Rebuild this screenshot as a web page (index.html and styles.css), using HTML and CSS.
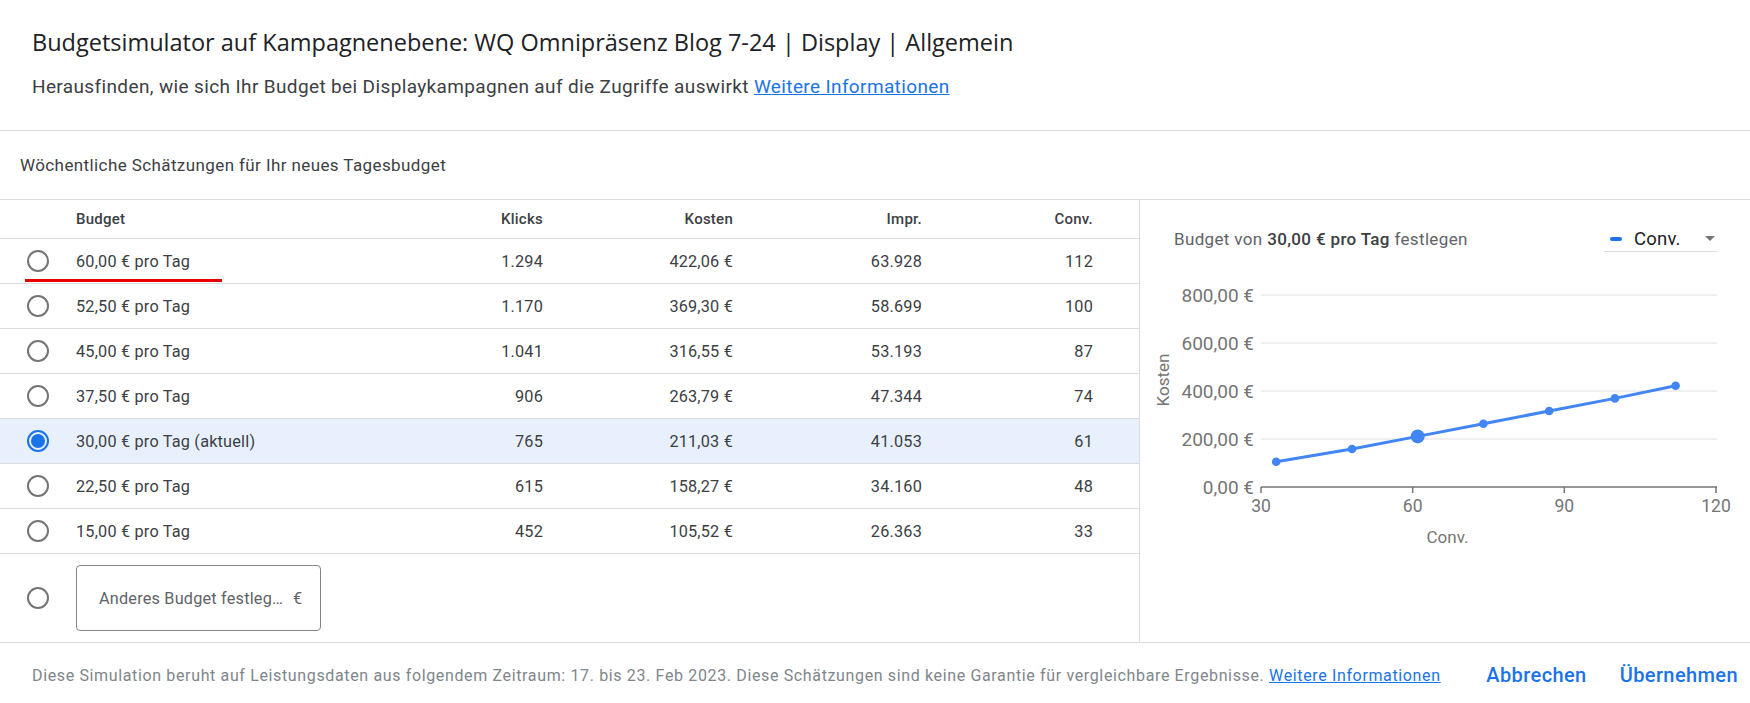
FILE: index.html
```html
<!DOCTYPE html>
<html lang="de">
<head>
<meta charset="utf-8">
<title>Budgetsimulator</title>
<link rel="stylesheet" href="styles.css">
</head>
<body>
<div class="dialog">
  <header class="dialog-head">
    <h1 class="title">Budgetsimulator auf Kampagnenebene: WQ Omnipräsenz Blog 7-24 | Display | Allgemein</h1>
    <p class="subtitle">Herausfinden, wie sich Ihr Budget bei Displaykampagnen auf die Zugriffe auswirkt <a href="#" class="link">Weitere Informationen</a></p>
  </header>

  <div class="section-title">Wöchentliche Schätzungen für Ihr neues Tagesbudget</div>

  <div class="main">
    <div class="table">
      <div class="row head">
        <span></span>
        <span class="c-budget">Budget</span>
        <span class="num">Klicks</span>
        <span class="num">Kosten</span>
        <span class="num">Impr.</span>
        <span class="num">Conv.</span>
      </div>
      <div class="row">
        <span class="radio"></span>
        <span class="c-budget marked">60,00 € pro Tag</span>
        <span class="num">1.294</span>
        <span class="num">422,06 €</span>
        <span class="num">63.928</span>
        <span class="num">112</span>
      </div>
      <div class="row">
        <span class="radio"></span>
        <span class="c-budget">52,50 € pro Tag</span>
        <span class="num">1.170</span>
        <span class="num">369,30 €</span>
        <span class="num">58.699</span>
        <span class="num">100</span>
      </div>
      <div class="row">
        <span class="radio"></span>
        <span class="c-budget">45,00 € pro Tag</span>
        <span class="num">1.041</span>
        <span class="num">316,55 €</span>
        <span class="num">53.193</span>
        <span class="num">87</span>
      </div>
      <div class="row">
        <span class="radio"></span>
        <span class="c-budget">37,50 € pro Tag</span>
        <span class="num">906</span>
        <span class="num">263,79 €</span>
        <span class="num">47.344</span>
        <span class="num">74</span>
      </div>
      <div class="row selected">
        <span class="radio checked"></span>
        <span class="c-budget">30,00 € pro Tag (aktuell)</span>
        <span class="num">765</span>
        <span class="num">211,03 €</span>
        <span class="num">41.053</span>
        <span class="num">61</span>
      </div>
      <div class="row">
        <span class="radio"></span>
        <span class="c-budget">22,50 € pro Tag</span>
        <span class="num">615</span>
        <span class="num">158,27 €</span>
        <span class="num">34.160</span>
        <span class="num">48</span>
      </div>
      <div class="row">
        <span class="radio"></span>
        <span class="c-budget">15,00 € pro Tag</span>
        <span class="num">452</span>
        <span class="num">105,52 €</span>
        <span class="num">26.363</span>
        <span class="num">33</span>
      </div>
      <div class="row custom">
        <span class="radio"></span>
        <div class="budget-input">
          <span class="placeholder">Anderes Budget festleg…</span>
          <span class="currency">€</span>
        </div>
      </div>
    </div>

    <aside class="chart-panel">
      <div class="chart-head">
        <span class="chart-caption">Budget von <b>30,00 € pro Tag</b> festlegen</span>
        <div class="metric-select">
          <span class="swatch"></span>
          <span class="metric-name">Conv.</span>
          <span class="caret"></span>
        </div>
      </div>
      <svg class="chart" width="610" height="300" viewBox="0 0 610 300">
        <g class="grid">
          <line x1="121" y1="33" x2="577" y2="33"/>
          <line x1="121" y1="81" x2="577" y2="81"/>
          <line x1="121" y1="129" x2="577" y2="129"/>
          <line x1="121" y1="177" x2="577" y2="177"/>
        </g>
        <g class="axis">
          <line x1="121" y1="225" x2="577" y2="225"/>
          <line x1="121" y1="225" x2="121" y2="231"/>
          <line x1="272.7" y1="225" x2="272.7" y2="231"/>
          <line x1="424.3" y1="225" x2="424.3" y2="231"/>
          <line x1="576" y1="225" x2="576" y2="231"/>
        </g>
        <g class="ylabels">
          <text x="114" y="39.5">800,00 €</text>
          <text x="114" y="87.5">600,00 €</text>
          <text x="114" y="135.5">400,00 €</text>
          <text x="114" y="183.5">200,00 €</text>
          <text x="114" y="231.5">0,00 €</text>
        </g>
        <g class="xlabels">
          <text x="121" y="250">30</text>
          <text x="272.7" y="250">60</text>
          <text x="424.3" y="250">90</text>
          <text x="576" y="250">120</text>
        </g>
        <text class="axis-title" x="307.5" y="281">Conv.</text>
        <text class="axis-title" transform="translate(28.5 118) rotate(-90)">Kosten</text>
        <polyline class="series" points="136.2,199.7 212,187 277.7,174.4 343.4,161.7 409.2,149 474.9,136.4 535.6,123.7"/>
        <g class="dots">
          <circle cx="136.2" cy="199.7" r="4.3"/>
          <circle cx="212" cy="187" r="4.3"/>
          <circle cx="277.7" cy="174.4" r="7"/>
          <circle cx="343.4" cy="161.7" r="4.3"/>
          <circle cx="409.2" cy="149" r="4.3"/>
          <circle cx="474.9" cy="136.4" r="4.3"/>
          <circle cx="535.6" cy="123.7" r="4.3"/>
        </g>
      </svg>
    </aside>
  </div>

  <footer class="dialog-foot">
    <p class="note">Diese Simulation beruht auf Leistungsdaten aus folgendem Zeitraum: 17. bis 23. Feb 2023. Diese Schätzungen sind keine Garantie für vergleichbare Ergebnisse. <a href="#" class="link">Weitere Informationen</a></p>
    <div class="actions">
      <button class="btn">Abbrechen</button>
      <button class="btn">Übernehmen</button>
    </div>
  </footer>
</div>
</body>
</html>
```

FILE: styles.css
```css
* { box-sizing: border-box; }

html, body {
  margin: 0;
  padding: 0;
  background: #fff;
}

body {
  font-family: Roboto, "Liberation Sans", Arial, sans-serif;
  color: #3c4043;
}

.dialog {
  width: 1750px;
  height: 703px;
  display: flex;
  flex-direction: column;
}

/* ---------- header ---------- */
.dialog-head {
  height: 131px;
  padding: 26px 0 0 32px;
  border-bottom: 1px solid #dadce0;
}

.title {
  margin: 0;
  font-family: "Open Sans", Roboto, sans-serif;
  font-weight: 400;
  font-size: 23.5px;
  line-height: 32px;
  color: #202124;
}

.subtitle {
  margin: 17px 0 0;
  font-size: 19px;
  line-height: 24px;
  letter-spacing: 0.37px;
  color: #3c4043;
}

.link {
  color: #1a73e8;
  text-decoration: underline;
}

/* ---------- section title ---------- */
.section-title {
  height: 69px;
  padding-left: 20px;
  display: flex;
  align-items: center;
  font-size: 17px;
  letter-spacing: 0.4px;
  color: #3c4043;
  border-bottom: 1px solid #dadce0;
}

/* ---------- main area ---------- */
.main {
  flex: 0 0 443px;
  display: flex;
  border-bottom: 1px solid #dadce0;
}

.table {
  width: 1140px;
  border-right: 1px solid #dadce0;
  display: flex;
  flex-direction: column;
}

.row {
  display: grid;
  grid-template-columns: 76px 1fr 190px 190px 189px 171px;
  padding-right: 46px;
  align-items: center;
  height: 45px;
  border-bottom: 1px solid #dadce0;
  font-size: 16.25px;
  letter-spacing: 0.2px;
  color: #3c4043;
}

.row.head {
  height: 39px;
  font-size: 15px;
  font-weight: 500;
  letter-spacing: 0.25px;
}

.row.selected {
  background: #e8f0fe;
}

.row.custom {
  flex: 1;
  border-bottom: none;
}

.num {
  text-align: right;
}

.c-budget {
  position: relative;
}

/* red annotation stroke under the first budget option */
.marked::after {
  content: "";
  position: absolute;
  left: -51px;
  top: 27px;
  width: 197px;
  height: 3px;
  background: #e60000;
}

.radio {
  justify-self: start;
  margin-left: 27px;
  width: 22px;
  height: 22px;
  border: 2px solid #757575;
  border-radius: 50%;
  position: relative;
}

.radio.checked {
  border-color: #1a73e8;
}

.radio.checked::after {
  content: "";
  position: absolute;
  left: 2px;
  top: 2px;
  width: 14px;
  height: 14px;
  border-radius: 50%;
  background: #1a73e8;
}

.budget-input {
  width: 245px;
  height: 66px;
  border: 1px solid #80868b;
  border-radius: 4px;
  display: flex;
  align-items: center;
  padding-left: 22px;
  gap: 10px;
  font-size: 16.25px;
  letter-spacing: 0.2px;
  color: #5f6368;
}

/* ---------- chart panel ---------- */
.chart-panel {
  flex: 1;
  display: flex;
  flex-direction: column;
}

.chart-head {
  height: 62px;
  padding: 26px 33px 0 34px;
  display: flex;
  justify-content: space-between;
  align-items: flex-start;
}

.chart-caption {
  font-size: 17px;
  line-height: 26px;
  letter-spacing: 0.35px;
  color: #5f6368;
}

.chart-caption b {
  font-weight: 500;
  color: #3c4043;
}

.metric-select {
  width: 113px;
  height: 26px;
  display: flex;
  align-items: center;
  padding-left: 6px;
  border-bottom: 1px solid #dadce0;
}

.swatch {
  width: 12px;
  height: 4px;
  border-radius: 2px;
  background: #1a73e8;
}

.metric-name {
  margin-left: 12px;
  font-size: 18.5px;
  letter-spacing: 0.2px;
  color: #202124;
}

.caret {
  margin-left: auto;
  margin-right: 2px;
  width: 0;
  height: 0;
  border-left: 5px solid transparent;
  border-right: 5px solid transparent;
  border-top: 5px solid #757575;
}

.chart {
  display: block;
  font-family: Roboto, "Liberation Sans", Arial, sans-serif;
}

.grid line {
  stroke: #e0e0e0;
  stroke-width: 1;
}

.axis line {
  stroke: #757575;
  stroke-width: 1.5;
}

.ylabels text {
  font-size: 19px;
  fill: #757575;
  text-anchor: end;
}

.xlabels text {
  font-size: 17.5px;
  fill: #757575;
  text-anchor: middle;
}

.axis-title {
  font-size: 17px;
  fill: #757575;
  text-anchor: middle;
}

.series {
  fill: none;
  stroke: #4285f4;
  stroke-width: 3;
  stroke-linejoin: round;
}

.dots circle {
  fill: #4285f4;
}

/* ---------- footer ---------- */
.dialog-foot {
  flex: 1;
  display: flex;
  align-items: center;
  padding: 4px 12px 0 32px;
}

.note {
  margin: 0;
  font-size: 16px;
  letter-spacing: 0.64px;
  color: #80868b;
}

.actions {
  margin-left: auto;
  display: flex;
  gap: 33px;
}

.btn {
  border: none;
  background: none;
  padding: 0;
  font-family: Roboto, "Liberation Sans", Arial, sans-serif;
  font-weight: 500;
  font-size: 20px;
  letter-spacing: 0.4px;
  color: #1a73e8;
  cursor: pointer;
}
```
